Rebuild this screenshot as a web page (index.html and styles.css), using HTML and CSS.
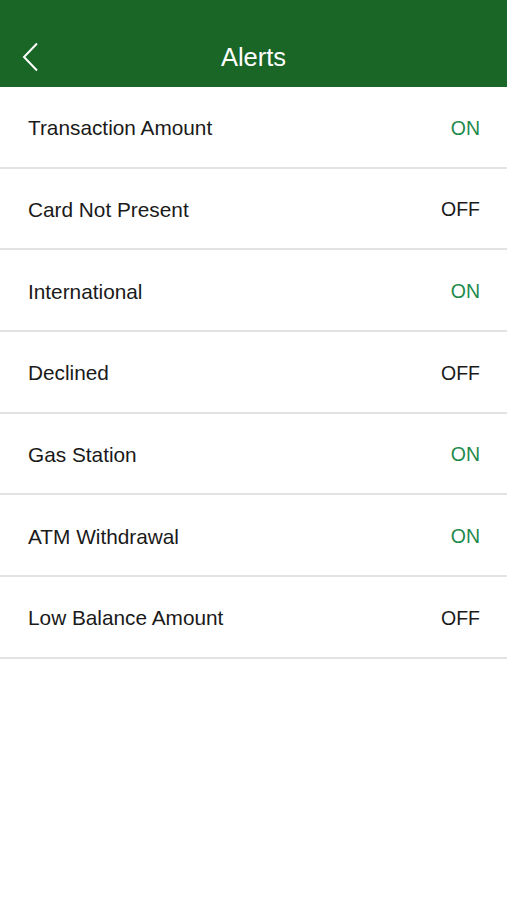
FILE: index.html
```html
<!DOCTYPE html>
<html>
<head>
    <title>Alerts</title>
    <link rel="stylesheet" href="styles.css">
</head>
<body>

<div class="navbar">
    <span class="back">
        <svg width="18" height="30" viewBox="0 0 18 30">
            <polyline points="16,1.5 3,15 16,28.5" fill="none" stroke="#fff" stroke-width="2"/>
        </svg>
    </span>
    <h1>Alerts</h1>
</div>

<ul class="alerts">
    <li><span class="name">Transaction Amount</span><span class="state on">ON</span></li>
    <li><span class="name">Card Not Present</span><span class="state">OFF</span></li>
    <li><span class="name">International</span><span class="state on">ON</span></li>
    <li><span class="name">Declined</span><span class="state">OFF</span></li>
    <li><span class="name">Gas Station</span><span class="state on">ON</span></li>
    <li><span class="name">ATM Withdrawal</span><span class="state on">ON</span></li>
    <li><span class="name">Low Balance Amount</span><span class="state">OFF</span></li>
</ul>

</body>
</html>
```
FILE: styles.css
```css
BODY {
    margin : 0;
    background : #fff;
    font-family : "Liberation Sans", Arial, helvetica, sans-serif;
    color : #1a1a1a;
}
.navbar {
    height : 87px;
    background-color : #196627;
    display : flex;
    align-items : center;
    justify-content : center;
    position : relative;
    padding-top : 28px;
    box-sizing : border-box;
}
.navbar H1 {
    margin : 0;
    color : #fff;
    font-size : 25.5px;
    font-weight : normal;
}
.back {
    position : absolute;
    left : 21px;
    top : 42px;
}
.alerts {
    list-style : none;
    margin : 0;
    padding : 0;
}
.alerts LI {
    height : 81.67px;
    box-sizing : border-box;
    border-bottom : 2px solid #e2e2e2;
    display : flex;
    align-items : center;
    justify-content : space-between;
    padding : 3px 27px 0 28px;
    font-size : 20.8px;
}
.state {
    font-size : 19.5px;
    color : #1a1a1a;
}
.state.on {
    color : #1e8a4c;
}
```
